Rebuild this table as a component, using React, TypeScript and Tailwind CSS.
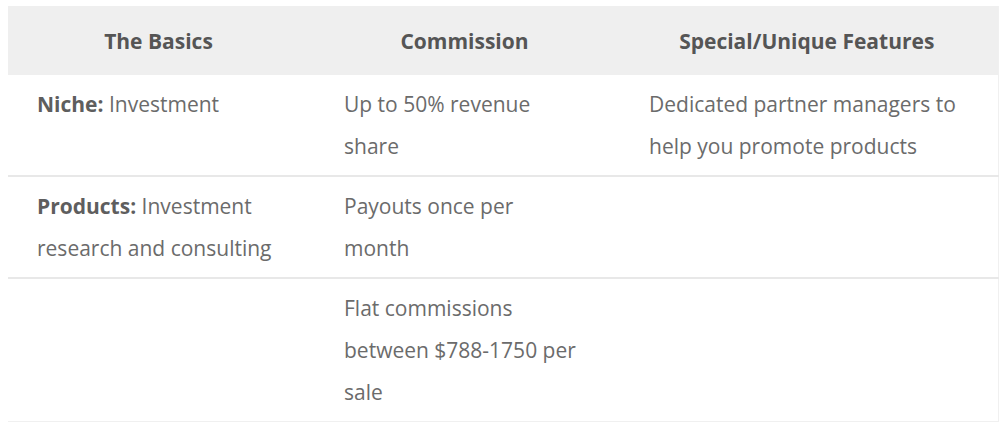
const rows = [
  {
    basics: (
      <>
        <strong className="font-bold text-[#5e5e5e]">Niche:</strong> Investment
      </>
    ),
    commission: "Up to 50% revenue share",
    features: "Dedicated partner managers to help you promote products",
  },
  {
    basics: (
      <>
        <strong className="font-bold text-[#5e5e5e]">Products:</strong> Investment research and consulting
      </>
    ),
    commission: "Payouts once per month",
    features: "",
  },
  {
    basics: null,
    commission: "Flat commissions between $788-1750 per sale",
    features: "",
  },
];

function App() {
  return (
    <div className="w-[1000px] h-[442px] bg-white pt-[6px] pl-[8px] font-['Open_Sans',sans-serif]">
      <table className="w-[990px] table-fixed border-collapse border-r border-b border-[#f0f0f0] text-[21px] leading-[42px] text-[#6b6b6b]">
        <colgroup>
          <col className="w-[307px]" />
          <col className="w-[305px]" />
          <col className="w-[378px]" />
        </colgroup>
        <thead>
          <tr className="bg-[#efefef]">
            <th className="h-[69px] pl-[24px] pr-[30px] font-bold text-[#555555] text-center">The Basics</th>
            <th className="h-[69px] pl-[24px] pr-[30px] font-bold text-[#555555] text-center">Commission</th>
            <th className="h-[69px] pl-[26px] pr-[30px] font-bold text-[#555555] text-center">Special/Unique Features</th>
          </tr>
        </thead>
        <tbody>
          {rows.map((row, i) => (
            <tr key={i} className={i < rows.length - 1 ? "border-b-2 border-[#e8e8e8]" : ""}>
              <td className="pl-[29px] pr-[29px] py-[8px] align-top text-left">{row.basics}</td>
              <td className="pl-[29px] pr-[37px] py-[8px] align-top text-left">{row.commission}</td>
              <td className="pl-[29px] pr-[29px] py-[8px] align-top text-left">{row.features}</td>
            </tr>
          ))}
        </tbody>
      </table>
    </div>
  );
}

export default App;
